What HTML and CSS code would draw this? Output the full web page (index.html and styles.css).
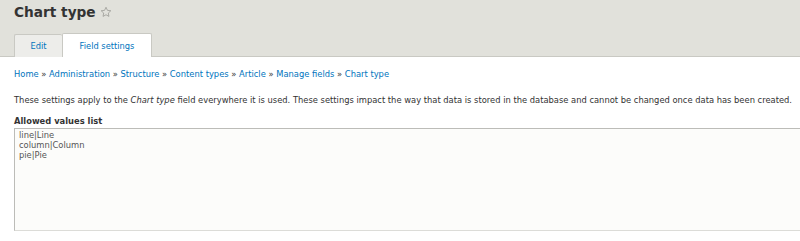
FILE: index.html
```html
<!DOCTYPE html>
<html>
<head>
<meta charset="utf-8">
<link rel="stylesheet" href="styles.css">
</head>
<body>
<header class="header">
  <h1 class="title">Chart type <span class="star"><svg width="12" height="12" viewBox="0 0 24 24"><path d="M12 2.5l2.9 6.2 6.7.8-5 4.6 1.3 6.7L12 17.5l-5.9 3.3 1.3-6.7-5-4.6 6.7-.8z" fill="none" stroke="#9a9a96" stroke-width="1.6" stroke-linejoin="round"/></svg></span></h1>
  <ul class="tabs">
    <li class="tab"><a href="#">Edit</a></li>
    <li class="tab active"><a href="#">Field settings</a></li>
  </ul>
</header>
<main class="content">
  <nav class="breadcrumb"><a href="#">Home</a> » <a href="#">Administration</a> » <a href="#">Structure</a> » <a href="#">Content types</a> » <a href="#">Article</a> » <a href="#">Manage fields</a> » <a href="#">Chart type</a></nav>
  <p class="desc">These settings apply to the <em>Chart type</em> field everywhere it is used. These settings impact the way that data is stored in the database and cannot be changed once data has been created.</p>
  <label class="label">Allowed values list</label>
  <div class="textarea">line|Line<br>column|Column<br>pie|Pie</div>
</main>
</body>
</html>
```
FILE: styles.css
```css
html, body { margin: 0; padding: 0; background: #fff; }
body { font-family: "DejaVu Sans", sans-serif; font-size: 8.35px; color: #333; overflow: hidden; }
.header { background: #e1e1db; border-bottom: 1px solid #c9c9c3; height: 57px; padding: 0 14px; box-sizing: border-box; display: flex; flex-direction: column; justify-content: space-between; }
.title { margin: 0; padding-top: 2px; font-size: 13.7px; font-weight: bold; color: #333; line-height: 20px; display: flex; align-items: center; gap: 4px; }
.star { display: flex; margin-top: -1px; }
.tabs { list-style: none; margin: 0 0 -1px 0; padding: 0; display: flex; }
.tab { height: 23px; box-sizing: border-box; display: flex; align-items: center; justify-content: center; background: #ededea; border: 1px solid #c9c9c3; border-bottom: none; border-radius: 2px 2px 0 0; }
.tab a { color: #0074bd; text-decoration: none; font-size: 8.3px; }
.tab:first-child { width: 48px; border-right: none; }
.tab.active { width: 90px; background: #fff; height: 24px; margin-top: -1px; }
.content { padding: 0 14px; }
.breadcrumb { margin-top: 12px; line-height: 10px; }
.breadcrumb a { color: #0074bd; text-decoration: none; }
.desc { margin: 16px 0 0; line-height: 10px; white-space: nowrap; }
.label { display: block; font-weight: bold; margin-top: 11px; line-height: 10px; }
.textarea { margin-top: 2px; margin-right: -20px; height: 103px; box-sizing: border-box; border: 1px solid #bcbcb8; border-bottom-color: #dcdcd8; background: #fcfcfa; padding: 1px 4px; line-height: 10px; color: #555; }
```
